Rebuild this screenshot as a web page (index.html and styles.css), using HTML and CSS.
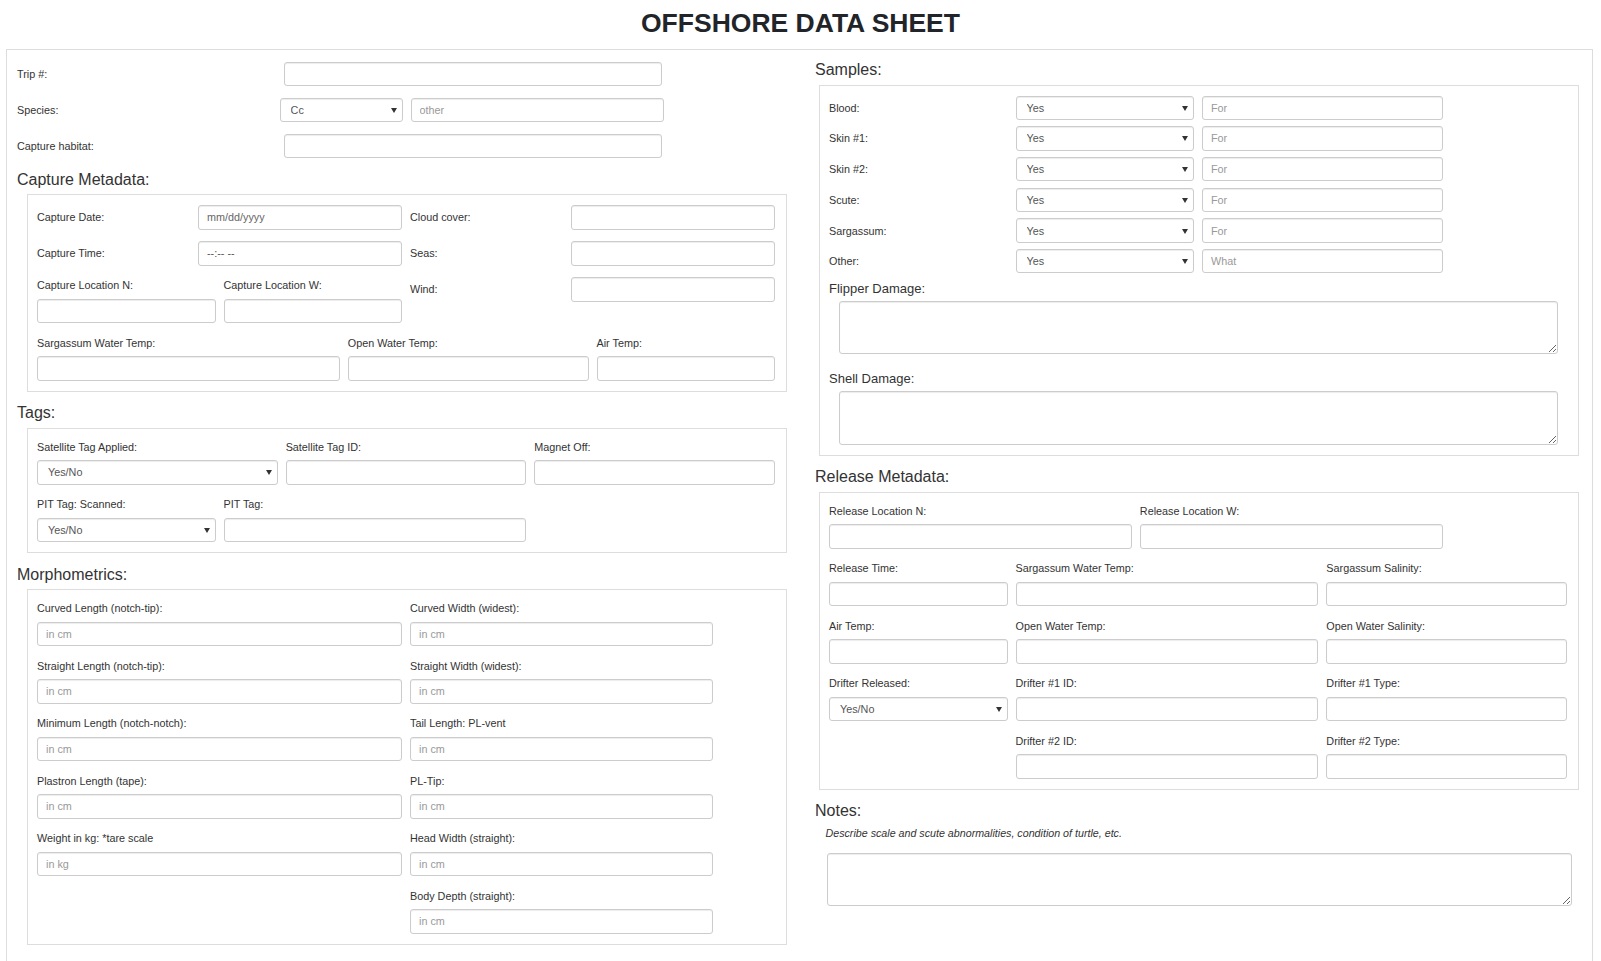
FILE: index.html
```html
<!DOCTYPE html>
<html lang="en">
<head>
	<meta charset="UTF-8">
	<title>Offshore Data Sheet</title>
	<link rel="stylesheet" href="styles.css">
</head>
<body>
<h1>OFFSHORE DATA SHEET</h1>
<div class="sheet">
	<div class="col-left">
		<div class="line">
			<label class="lab-trip">Trip #:</label>
			<input class="fc w-trip" type="text">
		</div>
		<div class="line">
			<label class="lab-species">Species:</label>
			<div class="sel w-species"><select class="fc"><option>Cc</option></select></div>
			<input class="fc w-other" type="text" placeholder="other">
		</div>
		<div class="line">
			<label class="lab-trip">Capture habitat:</label>
			<input class="fc w-trip" type="text">
		</div>

		<h3>Capture Metadata:</h3>
		<div class="box">
			<div class="row">
				<div class="pair c6"><label>Capture Date:</label><input class="fc dark" type="text" placeholder="mm/dd/yyyy"></div>
				<div class="pair c6"><label>Cloud cover:</label><input class="fc" type="text"></div>
			</div>
			<div class="row">
				<div class="pair c6"><label>Capture Time:</label><input class="fc" type="text" value="--:-- --"></div>
				<div class="pair c6"><label>Seas:</label><input class="fc" type="text"></div>
			</div>
			<div class="row">
				<div class="grp c3"><label>Capture Location N:</label><input class="fc" type="text"></div>
				<div class="grp c3"><label>Capture Location W:</label><input class="fc" type="text"></div>
				<div class="pair c6"><label>Wind:</label><input class="fc" type="text"></div>
			</div>
			<div class="row">
				<div class="grp c5"><label>Sargassum Water Temp:</label><input class="fc" type="text"></div>
				<div class="grp c4"><label>Open Water Temp:</label><input class="fc" type="text"></div>
				<div class="grp c3"><label>Air Temp:</label><input class="fc" type="text"></div>
			</div>
		</div>

		<h3>Tags:</h3>
		<div class="box">
			<div class="row">
				<div class="grp c4"><label>Satellite Tag Applied:</label><div class="sel"><select class="fc"><option>Yes/No</option></select></div></div>
				<div class="grp c4"><label>Satellite Tag ID:</label><input class="fc" type="text"></div>
				<div class="grp c4"><label>Magnet Off:</label><input class="fc" type="text"></div>
			</div>
			<div class="row">
				<div class="grp c3"><label>PIT Tag: Scanned:</label><div class="sel"><select class="fc"><option>Yes/No</option></select></div></div>
				<div class="grp c5"><label>PIT Tag:</label><input class="fc" type="text"></div>
			</div>
		</div>

		<h3>Morphometrics:</h3>
		<div class="box">
			<div class="row">
				<div class="grp c6"><label>Curved Length (notch-tip):</label><input class="fc" type="text" placeholder="in cm"></div>
				<div class="grp c5"><label>Curved Width (widest):</label><input class="fc" type="text" placeholder="in cm"></div>
			</div>
			<div class="row">
				<div class="grp c6"><label>Straight Length (notch-tip):</label><input class="fc" type="text" placeholder="in cm"></div>
				<div class="grp c5"><label>Straight Width (widest):</label><input class="fc" type="text" placeholder="in cm"></div>
			</div>
			<div class="row">
				<div class="grp c6"><label>Minimum Length (notch-notch):</label><input class="fc" type="text" placeholder="in cm"></div>
				<div class="grp c5"><label>Tail Length: PL-vent</label><input class="fc" type="text" placeholder="in cm"></div>
			</div>
			<div class="row">
				<div class="grp c6"><label>Plastron Length (tape):</label><input class="fc" type="text" placeholder="in cm"></div>
				<div class="grp c5"><label>PL-Tip:</label><input class="fc" type="text" placeholder="in cm"></div>
			</div>
			<div class="row">
				<div class="grp c6"><label>Weight in kg: *tare scale</label><input class="fc" type="text" placeholder="in kg"></div>
				<div class="grp c5"><label>Head Width (straight):</label><input class="fc" type="text" placeholder="in cm"></div>
			</div>
			<div class="row">
				<div class="grp c5 at7"><label>Body Depth (straight):</label><input class="fc" type="text" placeholder="in cm"></div>
			</div>
		</div>
	</div>

	<div class="col-right">
		<h3 class="samples-head">Samples:</h3>
		<div class="box">
			<div class="srow">
				<label class="c3">Blood:</label>
				<div class="sel c3"><select class="fc"><option>Yes</option></select></div>
				<input class="fc c4" type="text" placeholder="For">
			</div>
			<div class="srow">
				<label class="c3">Skin #1:</label>
				<div class="sel c3"><select class="fc"><option>Yes</option></select></div>
				<input class="fc c4" type="text" placeholder="For">
			</div>
			<div class="srow">
				<label class="c3">Skin #2:</label>
				<div class="sel c3"><select class="fc"><option>Yes</option></select></div>
				<input class="fc c4" type="text" placeholder="For">
			</div>
			<div class="srow">
				<label class="c3">Scute:</label>
				<div class="sel c3"><select class="fc"><option>Yes</option></select></div>
				<input class="fc c4" type="text" placeholder="For">
			</div>
			<div class="srow">
				<label class="c3">Sargassum:</label>
				<div class="sel c3"><select class="fc"><option>Yes</option></select></div>
				<input class="fc c4" type="text" placeholder="For">
			</div>
			<div class="srow">
				<label class="c3">Other:</label>
				<div class="sel c3"><select class="fc"><option>Yes</option></select></div>
				<input class="fc c4" type="text" placeholder="What">
			</div>
			<label class="dmg">Flipper Damage:</label>
			<textarea class="fc ta"></textarea>
			<label class="dmg">Shell Damage:</label>
			<textarea class="fc ta last"></textarea>
		</div>

		<h3>Release Metadata:</h3>
		<div class="box">
			<div class="row">
				<div class="grp c5"><label>Release Location N:</label><input class="fc" type="text"></div>
				<div class="grp c5"><label>Release Location W:</label><input class="fc" type="text"></div>
			</div>
			<div class="row">
				<div class="grp c3"><label>Release Time:</label><input class="fc" type="text"></div>
				<div class="grp c5"><label>Sargassum Water Temp:</label><input class="fc" type="text"></div>
				<div class="grp c4"><label>Sargassum Salinity:</label><input class="fc" type="text"></div>
			</div>
			<div class="row">
				<div class="grp c3"><label>Air Temp:</label><input class="fc" type="text"></div>
				<div class="grp c5"><label>Open Water Temp:</label><input class="fc" type="text"></div>
				<div class="grp c4"><label>Open Water Salinity:</label><input class="fc" type="text"></div>
			</div>
			<div class="row">
				<div class="grp c3"><label>Drifter Released:</label><div class="sel"><select class="fc"><option>Yes/No</option></select></div></div>
				<div class="grp c5"><label>Drifter #1 ID:</label><input class="fc" type="text"></div>
				<div class="grp c4"><label>Drifter #1 Type:</label><input class="fc" type="text"></div>
			</div>
			<div class="row">
				<div class="grp c5 at4"><label>Drifter #2 ID:</label><input class="fc" type="text"></div>
				<div class="grp c4"><label>Drifter #2 Type:</label><input class="fc" type="text"></div>
			</div>
		</div>

		<h3>Notes:</h3>
		<p class="note">Describe scale and scute abnormalities, condition of turtle, etc.</p>
		<textarea class="fc notes"></textarea>
	</div>
</div>
</body>
</html>
```

FILE: styles.css
```css
*{
	box-sizing: border-box;
}
body{
	margin: 0;
	padding-top: 8px;
	font-family: "Liberation Sans", Arial, sans-serif;
	color: #333;
	background: #fff;
}
h1{
	margin: 0 0 11px;
	font-size: 26.5px;
	line-height: 30px;
	text-align: center;
	color: #212529;
}
.sheet{
	margin-left: 6px;
	width: 1587px;
	border: 1px solid #ddd;
	border-bottom: none;
	padding: 0 0 40px 10px;
	display: grid;
	grid-template-columns: 770px 764px;
	column-gap: 28px;
	align-items: start;
}
.col-left{
	padding-top: 11.7px;
}
.col-right{
	padding-top: 9.5px;
}
h3{
	margin: 0 0 4.5px;
	font-size: 16px;
	line-height: 20px;
	font-weight: normal;
}
.samples-head{
	margin-bottom: 5px;
}
.box{
	width: 760px;
	border: 1px solid #ddd;
	padding: 10px 11px 10px 9px;
	margin-bottom: 11.5px;
}
.col-left .box{
	margin-left: 10px;
}
.col-right .box{
	margin-left: 4px;
}
label{
	display: block;
	font-size: 10.8px;
	line-height: 16px;
}
.fc{
	display: block;
	width: 100%;
	height: 24.5px;
	margin: 0;
	padding: 0 8px;
	border: 1px solid #ccc;
	border-radius: 3px;
	box-shadow: inset 0 1px 1px rgba(0,0,0,.075);
	font: 10.8px "Liberation Sans", Arial, sans-serif;
	color: #555;
	background: #fff;
	outline: none;
}
.fc::placeholder{
	color: #999;
}
.fc.dark::placeholder{
	color: #666;
}
select.fc{
	-webkit-appearance: none;
	appearance: none;
	padding-left: 10px;
}
.sel{
	position: relative;
}
.sel::after{
	content: "";
	position: absolute;
	right: 6px;
	top: 50%;
	margin-top: -2px;
	border-left: 3px solid transparent;
	border-right: 3px solid transparent;
	border-top: 5px solid #333;
	pointer-events: none;
}

/* top lines */
.line{
	display: flex;
	align-items: center;
	margin-bottom: 11.5px;
}
.lab-trip{
	width: 266.7px;
}
.lab-species{
	width: 262.6px;
}
.w-trip{
	width: 378.3px;
}
.w-species{
	width: 123px;
	margin-right: 8px;
}
.w-other{
	width: 253.6px;
}

/* 12 column rows */
.row,
.srow{
	display: grid;
	grid-template-columns: repeat(12, minmax(0, 1fr));
	column-gap: 8px;
	margin-bottom: 11.5px;
}
.row:last-child{
	margin-bottom: 0;
}
.srow{
	align-items: center;
	margin-bottom: 6.2px;
}
.c3{ grid-column: span 3; }
.c4{ grid-column: span 4; }
.c5{ grid-column: span 5; }
.c6{ grid-column: span 6; }
.at4{ grid-column: 4 / span 5; }
.at7{ grid-column: 7 / span 5; }

.grp label{
	margin-bottom: 5.5px;
}
.pair{
	display: flex;
	align-items: center;
	justify-content: space-between;
	align-self: start;
}
.pair .fc{
	width: 204px;
}

/* damage */
.dmg{
	font-size: 13px;
	line-height: 18px;
	margin-bottom: 3px;
}
.ta{
	width: 718.5px;
	height: 53.5px;
	margin: 0 0 16px 10px;
	padding: 6px 8px;
}
.ta.last{
	margin-bottom: 0;
}

/* notes */
.note{
	margin: 0 0 12px 10.5px;
	font-size: 10.7px;
	line-height: 15px;
	font-style: italic;
}
.notes{
	width: 745px;
	height: 53px;
	margin-left: 11.6px;
	padding: 6px 8px;
}
```
